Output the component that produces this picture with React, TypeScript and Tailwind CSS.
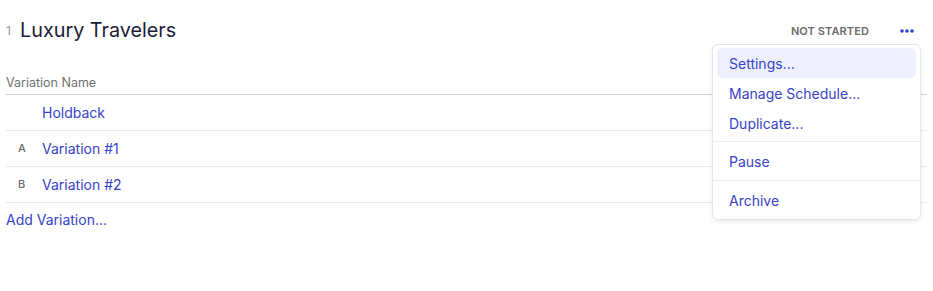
import React from "react";

const Dots = () => (
  <svg width="14" height="4" viewBox="0 0 14 4" fill="#3440c8">
    <circle cx="2" cy="2" r="1.8" />
    <circle cx="7" cy="2" r="1.8" />
    <circle cx="12" cy="2" r="1.8" />
  </svg>
);

export default function App() {
  const rows = [
    { letter: "", name: "Holdback" },
    { letter: "A", name: "Variation #1" },
    { letter: "B", name: "Variation #2" },
  ];
  return (
    <div
      className="relative w-[933px] h-[291px] bg-white overflow-hidden"
      style={{ fontFamily: "Inter, 'Noto Sans', sans-serif" }}
    >
      <div className="flex items-center h-[30px] mt-[16px] pl-[6px] pr-[19px]">
        <span className="text-[12px] text-[#9a9a9a] w-[14px]">1</span>
        <span className="text-[19.8px] text-[#1c1c3a] leading-none">Luxury Travelers</span>
        <div className="ml-auto flex items-center">
          <span className="text-[11px] font-semibold tracking-[0.1px] text-[#6b6b6b]">NOT STARTED</span>
          <span className="ml-[31px] flex items-center"><Dots /></span>
        </div>
      </div>
      <div className="mx-[6px] mt-[30px]">
        <div className="h-[19px] text-[12.5px] text-[#707070] border-b border-[#cfcfcf] leading-[14px]">
          Variation Name
        </div>
        {rows.map((r) => (
          <div key={r.name} className="flex items-center h-[36px] border-b border-[#e9e9e9]">
            <span className="w-[36px] pl-[12px] text-[11px] font-medium text-[#6b6b6b]">{r.letter}</span>
            <span className="text-[14px] text-[#3742c8]">{r.name}</span>
          </div>
        ))}
        <div className="h-[32px] flex items-center text-[14px] text-[#3742c8]">Add Variation...</div>
      </div>

      <div className="absolute top-[44px] right-[12px] w-[209px] bg-white border border-[#e6e6e6] rounded-[6px] shadow-[0_2px_4px_rgba(0,0,0,0.08)] text-[14px] text-[#3742c8]">
        <div className="py-[3px]">
          <div className="mx-[4px] h-[30px] flex items-center px-[12px] rounded-[5px] bg-[#eef0fd]">Settings...</div>
          <div className="mx-[4px] h-[30px] flex items-center px-[12px]">Manage Schedule...</div>
          <div className="mx-[4px] h-[30px] flex items-center px-[12px]">Duplicate...</div>
        </div>
        <div className="border-t border-[#ececec] py-[4px]">
          <div className="mx-[4px] h-[30px] flex items-center px-[12px]">Pause</div>
        </div>
        <div className="border-t border-[#ececec] py-[4px]">
          <div className="mx-[4px] h-[30px] flex items-center px-[12px]">Archive</div>
        </div>
      </div>
    </div>
  );
}
